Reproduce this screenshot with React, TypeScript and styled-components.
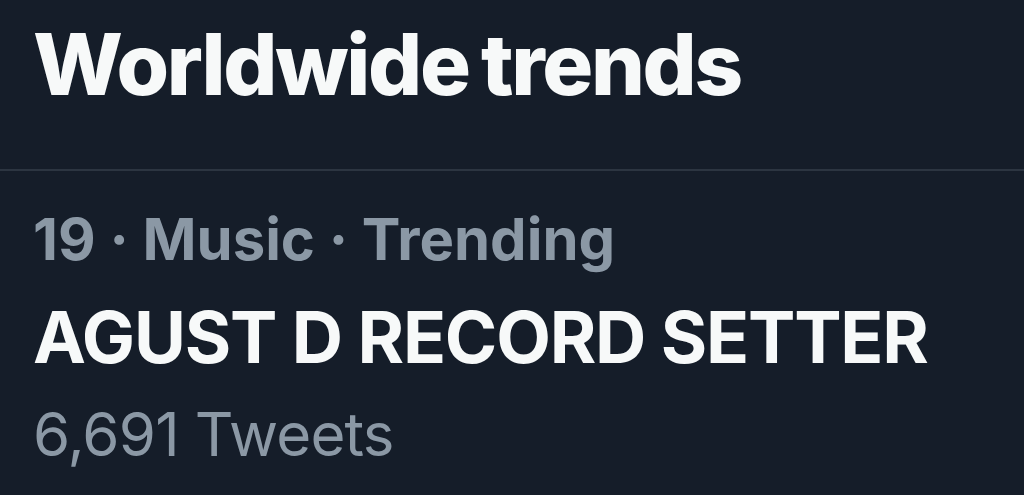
import React from "react";
import styled, { createGlobalStyle } from "styled-components";

const Global = createGlobalStyle`
  html, body { margin: 0; padding: 0; background: #151d29; }
  body { font-family: Inter, "Liberation Sans", Arial, sans-serif; }
`;

const Page = styled.div`
  width: 1024px;
  height: 495px;
  background: #151d29;
  overflow: hidden;
  display: flex;
  flex-direction: column;
`;

const Header = styled.header`
  padding: 15px 33px 0;
  height: 171px;
  box-sizing: border-box;
  border-bottom: 2px solid #2c3541;
`;

const Title = styled.h1`
  margin: 0;
  font-size: 85px;
  line-height: 100px;
  font-weight: 800;
  color: #f7f9f9;
  letter-spacing: -2.3px;
  word-spacing: -4px;
`;

const Trend = styled.section`
  padding: 33px 33px 0;
  display: flex;
  flex-direction: column;
`;

const Line = styled.div<{ $size: number; $lh: number; $weight: number; $color: string; $ls?: number; $mt?: number }>`
  font-size: ${(p) => p.$size}px;
  line-height: ${(p) => p.$lh}px;
  font-weight: ${(p) => p.$weight};
  color: ${(p) => p.$color};
  letter-spacing: ${(p) => p.$ls ?? 0}px;
  margin-top: ${(p) => p.$mt ?? 0}px;
  white-space: nowrap;
`;

export default function App() {
  return (
    <>
      <Global />
      <Page>
        <Header>
          <Title>Worldwide trends</Title>
        </Header>
        <Trend>
          <Line $size={58} $lh={70} $weight={700} $color="#8b98a5">
            19 · Music · Trending
          </Line>
          <Line $size={71} $lh={84} $weight={700} $color="#f7f9f9" $ls={-1.2} $mt={21}>
            AGUST D RECORD SETTER
          </Line>
          <Line $size={60} $lh={72} $weight={400} $color="#8b98a5" $ls={-0.8} $mt={19}>
            6,691 Tweets
          </Line>
        </Trend>
      </Page>
    </>
  );
}
